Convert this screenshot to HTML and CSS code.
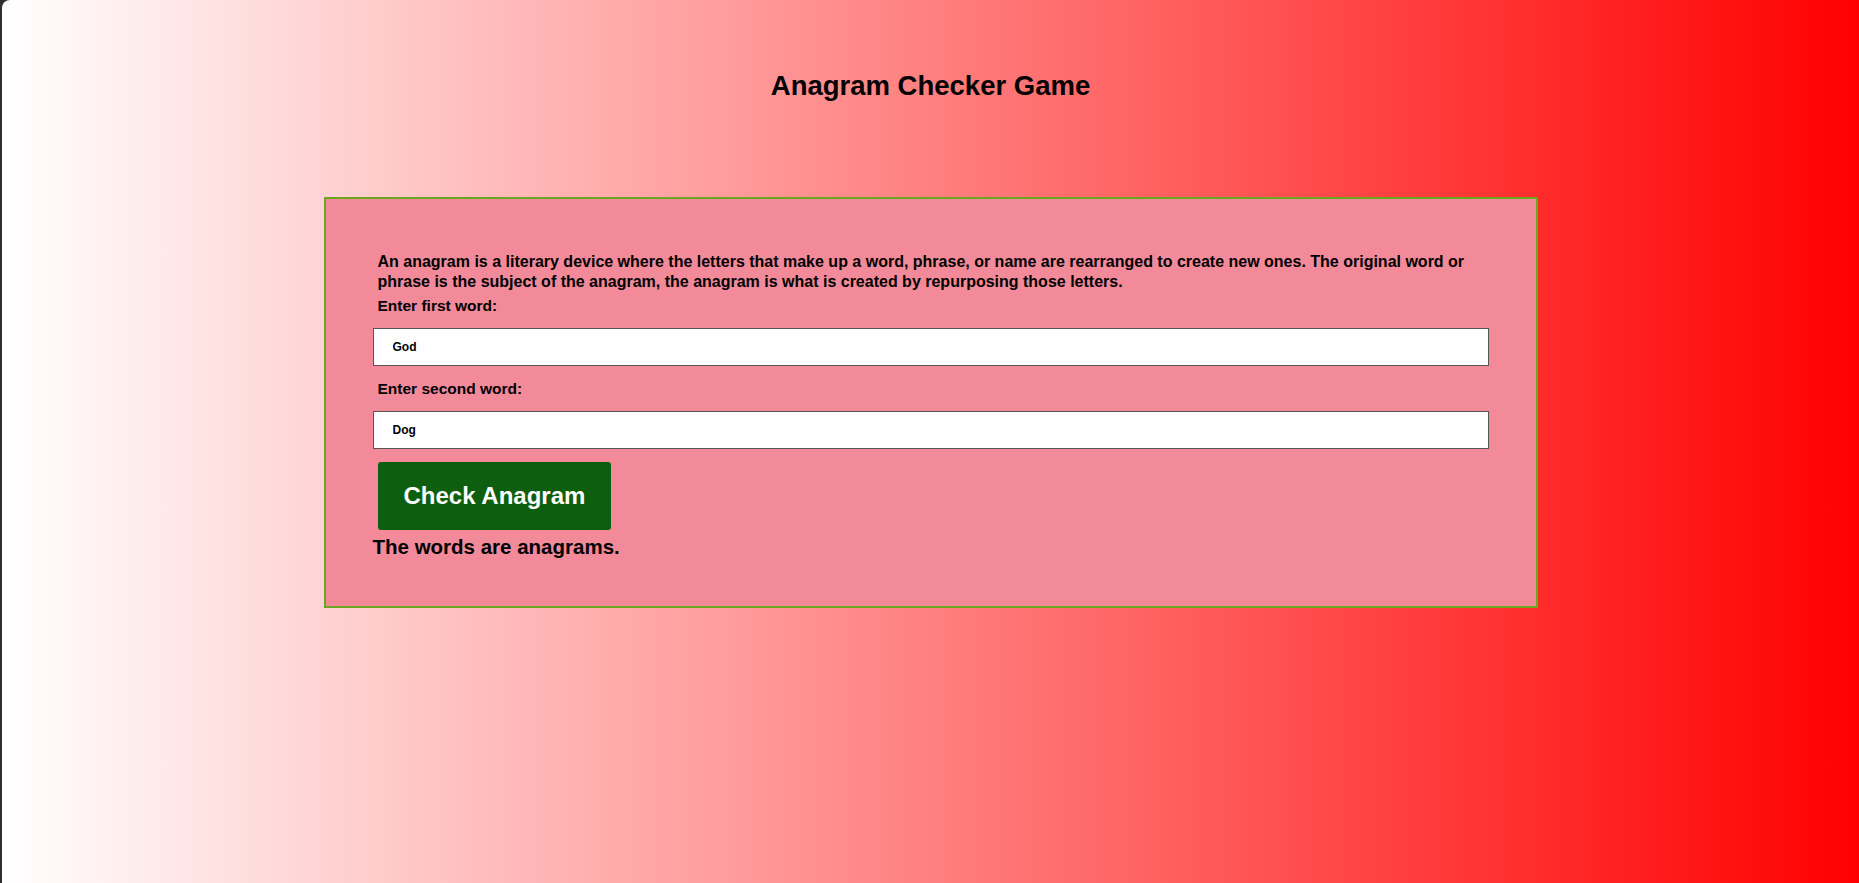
FILE: index.html
```html
<!DOCTYPE html>
<html lang="en">
<head>
<meta charset="utf-8">
<title>Anagram Checker Game</title>
<link rel="stylesheet" href="styles.css">
</head>
<body>
  <h1 class="title">Anagram Checker Game</h1>
  <div class="card">
    <p class="intro">An anagram is a literary device where the letters that make up a word, phrase, or name are rearranged to create new ones. The original word or phrase is the subject of the anagram, the anagram is what is created by repurposing those letters.</p>
    <label class="label" for="w1">Enter first word:</label>
    <input class="field" id="w1" type="text" value="God">
    <label class="label" for="w2">Enter second word:</label>
    <input class="field" id="w2" type="text" value="Dog">
    <button class="check" type="button">Check Anagram</button>
    <div class="result">The words are anagrams.</div>
  </div>
</body>
</html>
```
FILE: styles.css
```css
html {
  background: #2f2f2f;
  height: 100%;
}

body {
  margin: 0 0 0 2px;
  min-height: 100%;
  border-top-left-radius: 8px;
  background: linear-gradient(to right, #ffffff 0%, #ff0000 100%);
  font-family: "Liberation Sans", Arial, sans-serif;
  font-weight: bold;
  color: #000;
  overflow: hidden;
}

.title {
  margin: 0;
  padding-top: 70px;
  font-size: 27.5px;
  line-height: 31px;
  text-align: center;
  font-weight: bold;
}

.card {
  box-sizing: border-box;
  width: 1214px;
  margin: 96px auto 0;
  padding: 53px 47px 48px;
  background: #f38a9a;
  border: 2px solid #6aa61f;
}

.intro {
  margin: 0 0 4px 5px;
  font-size: 16px;
  line-height: 20px;
}

.label {
  display: block;
  margin: 0 0 12px 5px;
  font-size: 15.5px;
  line-height: 20px;
}

.field {
  display: block;
  box-sizing: border-box;
  width: 100%;
  height: 38px;
  margin: 0 0 13px;
  padding: 0 19px;
  border: 1px solid #555555;
  border-radius: 0;
  background: #fff;
  font-family: "Liberation Sans", Arial, sans-serif;
  font-weight: bold;
  font-size: 12px;
  color: #000;
  outline: none;
}

.check {
  display: block;
  height: 68px;
  margin: 0 0 5px 5px;
  padding: 0 26px;
  border: none;
  border-radius: 3px;
  background: #0d5e0f;
  color: #fff;
  font-family: "Liberation Sans", Arial, sans-serif;
  font-weight: bold;
  font-size: 24px;
}

.result {
  font-size: 20.5px;
  line-height: 23px;
}
```
